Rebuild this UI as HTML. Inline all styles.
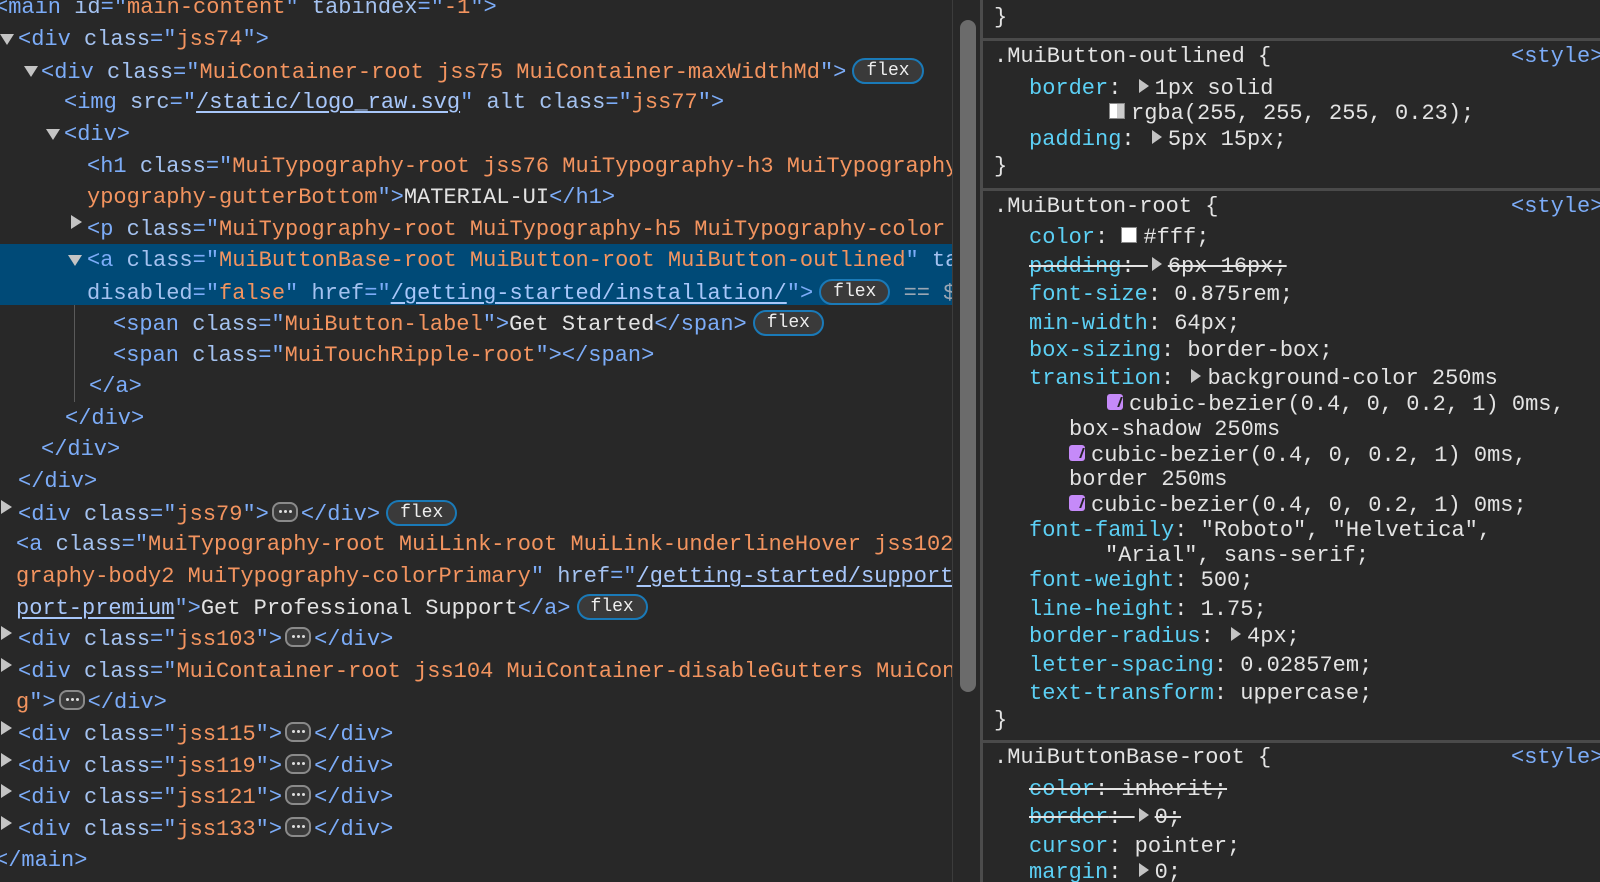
<!DOCTYPE html>
<html><head><meta charset="utf-8"><style>
html,body{margin:0;padding:0;}
body{width:1600px;height:882px;background:#282828;overflow:hidden;position:relative;font-family:"Liberation Mono","DejaVu Sans Mono",monospace;font-size:22px;color:#e3e3e3;}
.l{position:absolute;white-space:pre;line-height:26px;height:26px;}
#left{position:absolute;left:0;top:0;width:953px;height:882px;overflow:hidden;}
#right{position:absolute;left:983px;top:0;width:617px;height:882px;overflow:hidden;}
.t{color:#7cacf8}.a{color:#a4c2f0}.v{color:#f3945f}.u{color:#a8c7fa;text-decoration:underline;text-underline-offset:3px}
.tri{position:absolute;width:0;height:0;}
.td{border-left:7px solid transparent;border-right:7px solid transparent;border-top:11px solid #c4c4c4;}
.tr{border-top:7px solid transparent;border-bottom:7px solid transparent;border-left:11px solid #c4c4c4;}
.flex{display:inline-block;vertical-align:middle;border:2px solid #1a7ab8;border-radius:13px;background:#3a3a3a;color:#eee;font-size:18px;line-height:23px;height:22px;padding:0 12px;margin-left:6px;position:relative;top:-1px}
.dots{display:inline-block;vertical-align:middle;width:22px;height:16px;border:2px solid #8a8a8a;border-radius:8px;background:#3a3a3a;position:relative;top:-2px;margin:0 3px;}
.dots:after{content:"";position:absolute;left:5px;top:6px;width:3px;height:3px;border-radius:2px;background:#ddd;box-shadow:5px 0 #ddd,10px 0 #ddd}
.p{color:#5cd0f5}.s{text-decoration:line-through}
.sty{position:absolute;left:528px;color:#7cacf8}
.arr{display:inline-block;width:0;height:0;border-top:7px solid transparent;border-bottom:7px solid transparent;border-left:10px solid #c4c4c4;margin:0 6px 0 4px;vertical-align:middle;position:relative;top:-2px}
.sw{display:inline-block;width:14px;height:14px;border:1px solid #888;vertical-align:middle;margin-right:6px;position:relative;top:-2px}
.cb{display:inline-block;width:16px;height:16px;background:#c58af9;border-radius:3px;vertical-align:middle;margin-right:6px;position:relative;top:-2px}
.cb:after{content:"";position:absolute;left:4px;top:3px;width:8px;height:10px;border-right:2px solid #222;transform:skewX(-20deg)}
.hr{position:absolute;left:0;width:617px;height:3px;background:#4a4a4a}
</style></head><body>
<div id="left">
<div style="position:absolute;left:0;top:244px;width:953px;height:61px;background:#004a77"></div>
<div style="position:absolute;left:74px;top:305px;width:1px;height:97px;background:#5a5a5a"></div>

<div class="l" style="left:-5px;top:-5px"><span class="t">&lt;main</span> <span class="a">id</span><span class="t">="</span><span class="v">main-content</span><span class="t">"</span> <span class="a">tabindex</span><span class="t">="</span><span class="v">-1</span><span class="t">"&gt;</span></div>
<div class="tri td" style="left:0;top:34px"></div>
<div class="l" style="left:18px;top:27px"><span class="t">&lt;div</span> <span class="a">class</span><span class="t">="</span><span class="v">jss74</span><span class="t">"&gt;</span></div>
<div class="tri td" style="left:24px;top:66px"></div>
<div class="l" style="left:41px;top:59px"><span class="t">&lt;div</span> <span class="a">class</span><span class="t">="</span><span class="v">MuiContainer-root jss75 MuiContainer-maxWidthMd</span><span class="t">"&gt;</span><span class="flex">flex</span></div>
<div class="l" style="left:64px;top:90px"><span class="t">&lt;img</span> <span class="a">src</span><span class="t">="</span><span class="u">/static/logo_raw.svg</span><span class="t">"</span> <span class="a">alt</span> <span class="a">class</span><span class="t">="</span><span class="v">jss77</span><span class="t">"&gt;</span></div>
<div class="tri td" style="left:46px;top:129px"></div>
<div class="l" style="left:64px;top:122px"><span class="t">&lt;div&gt;</span></div>
<div class="l" style="left:87px;top:154px"><span class="t">&lt;h1</span> <span class="a">class</span><span class="t">="</span><span class="v">MuiTypography-root jss76 MuiTypography-h3 MuiTypography</span></div>
<div class="l" style="left:87px;top:185px"><span class="v">ypography-gutterBottom</span><span class="t">"&gt;</span>MATERIAL-UI<span class="t">&lt;/h1&gt;</span></div>
<div class="tri tr" style="left:71px;top:215px"></div>
<div class="l" style="left:87px;top:217px"><span class="t">&lt;p</span> <span class="a">class</span><span class="t">="</span><span class="v">MuiTypography-root MuiTypography-h5 MuiTypography-color</span></div>
<div class="tri td" style="left:68px;top:255px"></div>
<div class="l" style="left:87px;top:248px"><span class="t">&lt;a</span> <span class="a">class</span><span class="t">="</span><span class="v">MuiButtonBase-root MuiButton-root MuiButton-outlined</span><span class="t">"</span> <span class="a">tabindex</span></div>
<div class="l" style="left:87px;top:280px"><span class="a">disabled</span><span class="t">="</span><span class="v">false</span><span class="t">"</span> <span class="a">href</span><span class="t">="</span><span class="u">/getting-started/installation/</span><span class="t">"&gt;</span><span class="flex">flex</span> <span style="color:#9aa7b4">== $0</span></div>
<div class="l" style="left:113px;top:311px"><span class="t">&lt;span</span> <span class="a">class</span><span class="t">="</span><span class="v">MuiButton-label</span><span class="t">"&gt;</span>Get Started<span class="t">&lt;/span&gt;</span><span class="flex">flex</span></div>
<div class="l" style="left:113px;top:343px"><span class="t">&lt;span</span> <span class="a">class</span><span class="t">="</span><span class="v">MuiTouchRipple-root</span><span class="t">"&gt;&lt;/span&gt;</span></div>
<div class="l" style="left:89px;top:374px"><span class="t">&lt;/a&gt;</span></div>
<div class="l" style="left:65px;top:406px"><span class="t">&lt;/div&gt;</span></div>
<div class="l" style="left:41px;top:437px"><span class="t">&lt;/div&gt;</span></div>
<div class="l" style="left:18px;top:469px"><span class="t">&lt;/div&gt;</span></div>
<div class="tri tr" style="left:1px;top:500px"></div>
<div class="l" style="left:18px;top:501px"><span class="t">&lt;div</span> <span class="a">class</span><span class="t">="</span><span class="v">jss79</span><span class="t">"&gt;</span><span class="dots"></span><span class="t">&lt;/div&gt;</span><span class="flex">flex</span></div>
<div class="l" style="left:16px;top:532px"><span class="t">&lt;a</span> <span class="a">class</span><span class="t">="</span><span class="v">MuiTypography-root MuiLink-root MuiLink-underlineHover jss102</span></div>
<div class="l" style="left:16px;top:564px"><span class="v">graphy-body2 MuiTypography-colorPrimary</span><span class="t">"</span> <span class="a">href</span><span class="t">="</span><span class="u">/getting-started/support</span></div>
<div class="l" style="left:16px;top:595px"><span class="u">port-premium</span><span class="t">"&gt;</span>Get Professional Support<span class="t">&lt;/a&gt;</span><span class="flex">flex</span></div>
<div class="tri tr" style="left:1px;top:626px"></div>
<div class="l" style="left:18px;top:627px"><span class="t">&lt;div</span> <span class="a">class</span><span class="t">="</span><span class="v">jss103</span><span class="t">"&gt;</span><span class="dots"></span><span class="t">&lt;/div&gt;</span></div>
<div class="tri tr" style="left:1px;top:658px"></div>
<div class="l" style="left:18px;top:659px"><span class="t">&lt;div</span> <span class="a">class</span><span class="t">="</span><span class="v">MuiContainer-root jss104 MuiContainer-disableGutters MuiCon</span></div>
<div class="l" style="left:16px;top:690px"><span class="v">g</span><span class="t">"&gt;</span><span class="dots"></span><span class="t">&lt;/div&gt;</span></div>
<div class="tri tr" style="left:1px;top:721px"></div>
<div class="l" style="left:18px;top:722px"><span class="t">&lt;div</span> <span class="a">class</span><span class="t">="</span><span class="v">jss115</span><span class="t">"&gt;</span><span class="dots"></span><span class="t">&lt;/div&gt;</span></div>
<div class="tri tr" style="left:1px;top:753px"></div>
<div class="l" style="left:18px;top:754px"><span class="t">&lt;div</span> <span class="a">class</span><span class="t">="</span><span class="v">jss119</span><span class="t">"&gt;</span><span class="dots"></span><span class="t">&lt;/div&gt;</span></div>
<div class="tri tr" style="left:1px;top:784px"></div>
<div class="l" style="left:18px;top:785px"><span class="t">&lt;div</span> <span class="a">class</span><span class="t">="</span><span class="v">jss121</span><span class="t">"&gt;</span><span class="dots"></span><span class="t">&lt;/div&gt;</span></div>
<div class="tri tr" style="left:1px;top:816px"></div>
<div class="l" style="left:18px;top:817px"><span class="t">&lt;div</span> <span class="a">class</span><span class="t">="</span><span class="v">jss133</span><span class="t">"&gt;</span><span class="dots"></span><span class="t">&lt;/div&gt;</span></div>
<div class="l" style="left:-5px;top:848px"><span class="t">&lt;/main&gt;</span></div>
</div>

<div style="position:absolute;left:952px;top:0;width:1px;height:882px;background:#3c3c3c"></div>
<div style="position:absolute;left:960px;top:20px;width:16px;height:672px;background:#6b6b6b;border-radius:8px"></div>
<div style="position:absolute;left:980px;top:0;width:3px;height:882px;background:#4c4c4c"></div>

<div id="right">
<div class="l" style="left:11px;top:5px">}</div>
<div class="hr" style="top:38px"></div>
<div class="l" style="left:11px;top:44px">.MuiButton-outlined {<span class="sty" style="left:517px">&lt;style&gt;</span></div>
<div class="l" style="left:46px;top:76px"><span class="p">border</span>: <span class="arr"></span>1px solid</div>
<div class="l" style="left:126px;top:101px"><span class="sw" style="background:linear-gradient(90deg,#fff 50%,#ccc 50%)"></span>rgba(255, 255, 255, 0.23);</div>
<div class="l" style="left:46px;top:127px"><span class="p">padding</span>: <span class="arr"></span>5px 15px;</div>
<div class="l" style="left:11px;top:154px">}</div>
<div class="hr" style="top:188px"></div>
<div class="l" style="left:11px;top:194px">.MuiButton-root {<span class="sty" style="left:517px">&lt;style&gt;</span></div>
<div class="l" style="left:46px;top:225px"><span class="p">color</span>: <span class="sw" style="background:#fff"></span>#fff;</div>
<div class="l s" style="left:46px;top:254px"><span class="p">padding</span>: <span class="arr"></span>6px 16px;</div>
<div class="l" style="left:46px;top:282px"><span class="p">font-size</span>: 0.875rem;</div>
<div class="l" style="left:46px;top:311px"><span class="p">min-width</span>: 64px;</div>
<div class="l" style="left:46px;top:338px"><span class="p">box-sizing</span>: border-box;</div>
<div class="l" style="left:46px;top:366px"><span class="p">transition</span>: <span class="arr"></span>background-color 250ms</div>
<div class="l" style="left:124px;top:392px"><span class="cb"></span>cubic-bezier(0.4, 0, 0.2, 1) 0ms,</div>
<div class="l" style="left:86px;top:417px">box-shadow 250ms</div>
<div class="l" style="left:86px;top:443px"><span class="cb"></span>cubic-bezier(0.4, 0, 0.2, 1) 0ms,</div>
<div class="l" style="left:86px;top:467px">border 250ms</div>
<div class="l" style="left:86px;top:493px"><span class="cb"></span>cubic-bezier(0.4, 0, 0.2, 1) 0ms;</div>
<div class="l" style="left:46px;top:518px"><span class="p">font-family</span>: "Roboto", "Helvetica",</div>
<div class="l" style="left:122px;top:543px">"Arial", sans-serif;</div>
<div class="l" style="left:46px;top:568px"><span class="p">font-weight</span>: 500;</div>
<div class="l" style="left:46px;top:597px"><span class="p">line-height</span>: 1.75;</div>
<div class="l" style="left:46px;top:624px"><span class="p">border-radius</span>: <span class="arr"></span>4px;</div>
<div class="l" style="left:46px;top:653px"><span class="p">letter-spacing</span>: 0.02857em;</div>
<div class="l" style="left:46px;top:681px"><span class="p">text-transform</span>: uppercase;</div>
<div class="l" style="left:11px;top:708px">}</div>
<div class="hr" style="top:740px"></div>
<div class="l" style="left:11px;top:745px">.MuiButtonBase-root {<span class="sty" style="left:517px">&lt;style&gt;</span></div>
<div class="l s" style="left:46px;top:777px"><span class="p">color</span>: inherit;</div>
<div class="l s" style="left:46px;top:805px"><span class="p">border</span>: <span class="arr"></span>0;</div>
<div class="l" style="left:46px;top:834px"><span class="p">cursor</span>: pointer;</div>
<div class="l" style="left:46px;top:860px"><span class="p">margin</span>: <span class="arr"></span>0;</div>
</div>
</body></html>
